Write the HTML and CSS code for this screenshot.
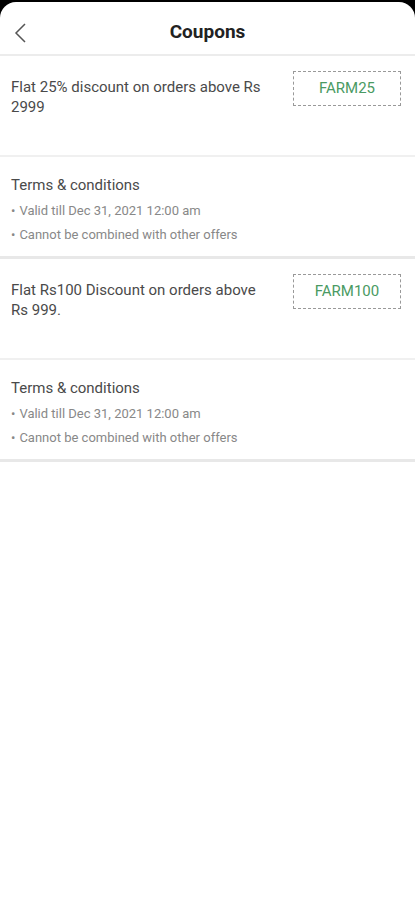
FILE: index.html
```html
<!DOCTYPE html>
<html lang="en">

<head>
    <meta charset="UTF-8">
    <meta name="viewport" content="width=device-width, initial-scale=1.0">
    <title>Coupons</title>
    <link rel="stylesheet" href="styles.css">
</head>

<body>
    <div class="screen">
        <div class="header">
            <button class="back-btn" aria-label="Back">
                <svg width="14" height="22" viewBox="0 0 14 22">
                    <polyline points="11,2 2,11 11,20" fill="none" stroke="#555" stroke-width="1.5" />
                </svg>
            </button>
            <h1 class="title">Coupons</h1>
        </div>

        <div class="coupon">
            <div class="coupon-text">Flat 25% discount on orders above Rs 2999</div>
            <div class="coupon-code">FARM25</div>
        </div>
        <div class="terms">
            <div class="terms-title">Terms &amp; conditions</div>
            <ul class="terms-list">
                <li>Valid till Dec 31, 2021 12:00 am</li>
                <li>Cannot be combined with other offers</li>
            </ul>
        </div>

        <div class="coupon">
            <div class="coupon-text">Flat Rs100 Discount on orders above Rs 999.</div>
            <div class="coupon-code">FARM100</div>
        </div>
        <div class="terms">
            <div class="terms-title">Terms &amp; conditions</div>
            <ul class="terms-list">
                <li>Valid till Dec 31, 2021 12:00 am</li>
                <li>Cannot be combined with other offers</li>
            </ul>
        </div>
    </div>
</body>

</html>
```

FILE: styles.css
```css
body {
    margin: 0;
    background-color: #000;
    font-family: Roboto, 'Noto Sans', sans-serif;
}

.screen {
    margin-top: 2px;
    background-color: #fff;
    border-radius: 16px 16px 0 0;
    min-height: 898px;
}

.header {
    display: flex;
    align-items: center;
    justify-content: center;
    position: relative;
    height: 45px;
    padding-top: 7px;
    border-bottom: 2px solid #ececec;
}

.back-btn {
    position: absolute;
    left: 14px;
    top: 20px;
    background: none;
    border: none;
    padding: 0;
    cursor: pointer;
}

.title {
    margin: 0;
    font-size: 19px;
    font-weight: 700;
    color: #222;
}

.coupon {
    display: flex;
    justify-content: space-between;
    align-items: flex-start;
    padding: 15px 14px 0 11px;
    height: 84px;
    border-bottom: 2px solid #f0f0f0;
}

.coupon-text {
    margin-top: 6px;
    width: 262px;
    font-size: 15px;
    line-height: 20px;
    color: #4a4a4a;
}

.coupon-code {
    width: 106px;
    height: 33px;
    line-height: 33px;
    text-align: center;
    border: 1px dashed #999;
    color: #4a9a63;
    font-size: 15px;
}

.terms {
    padding: 18px 11px 9px;
    border-bottom: 3px solid #e8e8e8;
}

.terms-title {
    font-size: 15px;
    line-height: 20px;
    color: #4a4a4a;
}

.terms-list {
    list-style: none;
    margin: 4px 0 0;
    padding: 0;
}

.terms-list li {
    font-size: 13px;
    line-height: 24px;
    color: #888;
}

.terms-list li::before {
    content: "\2022";
    margin-right: 4px;
}
```
